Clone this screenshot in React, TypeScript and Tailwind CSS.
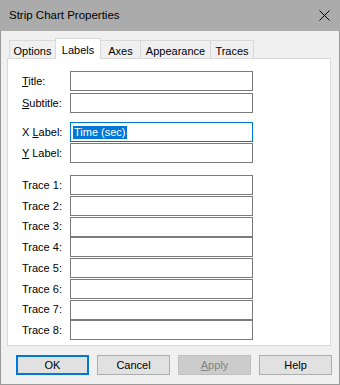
import React from 'react'

const tabs = ['Options', 'Labels', 'Axes', 'Appearance', 'Traces']
const tabWidths: Record<string, string> = {
  Options: 'w-[47px]',
  Labels: 'w-[46px]',
  Axes: 'w-[41px]',
  Appearance: 'w-[71px]',
  Traces: 'w-[44px]',
}

function Label({ children }: { children: React.ReactNode }) {
  return <div className="w-[48px] shrink-0 text-black">{children}</div>
}

function Field({ label, focused, value }: { label: React.ReactNode; focused?: boolean; value?: string }) {
  return (
    <div className="flex items-center">
      <Label>{label}</Label>
      <div
        className={
          'h-[20px] w-[183px] bg-white border flex items-center pl-[2px] ' +
          (focused ? 'border-[#0078d7]' : 'border-[#7a7a7a]')
        }
      >
        {value && <span className="bg-[#0078d7] text-white leading-[13px] h-[13px] px-px">{value}</span>}
      </div>
    </div>
  )
}

function Button({ children, primary, disabled }: { children: React.ReactNode; primary?: boolean; disabled?: boolean }) {
  let cls = 'h-[20px] w-[73px] flex items-center justify-center '
  if (primary) cls += 'border-2 border-[#0078d7] bg-[#e1e1e1] text-black'
  else if (disabled) cls += 'border border-[#bfbfbf] bg-[#cccccc] text-[#838383]'
  else cls += 'border border-[#adadad] bg-[#e1e1e1] text-black'
  return <div className={cls}>{children}</div>
}

export default function App() {
  return (
    <div className="w-[340px] h-[385px] flex flex-col font-['Liberation_Sans',Arial,sans-serif] text-[11px] select-none">
      {/* title bar */}
      <div className="h-[31px] shrink-0 bg-[#ababab] flex items-center justify-between pl-[9px] pr-[10px]">
        <span className="text-[11.5px] text-black">Strip Chart Properties</span>
        <svg width="11" height="11" viewBox="0 0 11 11" className="mt-[-1px]">
          <path d="M0.5 0.5 L10.5 10.5 M10.5 0.5 L0.5 10.5" stroke="#000" strokeWidth="1" />
        </svg>
      </div>

      <div className="flex-1 bg-[#f0f0f0] border-x border-b border-[#9a9a9a] flex flex-col">
        {/* tab strip */}
        <div className="mt-[7px] ml-[8px] h-[20px] flex items-end">
          {tabs.map((t, i) => {
            const sel = t === 'Labels'
            return (
              <div
                key={t}
                className={
                  tabWidths[t] +
                  ' flex justify-center border-t border-x border-[#d9d9d9] ' +
                  (i > 0 ? '-ml-px ' : '') +
                  (sel
                    ? 'h-[21px] -mb-px bg-white relative z-10 items-start pt-[3px]'
                    : 'h-[18px] bg-[#f0f0f0] items-start pt-[2px]')
                }
              >
                {t}
              </div>
            )
          })}
        </div>

        {/* panel */}
        <div className="ml-[6px] w-[324px] h-[288px] bg-white border border-[#d9d9d9] pl-[14px] pt-[12px]">
          <div className="flex flex-col gap-[2px]">
            <Field label={<><u>T</u>itle:</>} />
            <Field label={<><u>S</u>ubtitle:</>} />
          </div>
          <div className="flex flex-col gap-px mt-[9px]">
            <Field label={<>X <u>L</u>abel:</>} focused value="Time (sec)" />
            <Field label={<><u>Y</u> Label:</>} />
          </div>
          <div className="flex flex-col gap-[0.75px] mt-[12px]">
            {[1, 2, 3, 4, 5, 6, 7, 8].map((n) => (
              <Field key={n} label={`Trace ${n}:`} />
            ))}
          </div>
        </div>

        {/* buttons */}
        <div className="mt-[9px] ml-[15px] flex gap-[8px]">
          <Button primary>OK</Button>
          <Button>Cancel</Button>
          <Button disabled>
            <span><u>A</u>pply</span>
          </Button>
          <Button>Help</Button>
        </div>
      </div>
    </div>
  )
}
